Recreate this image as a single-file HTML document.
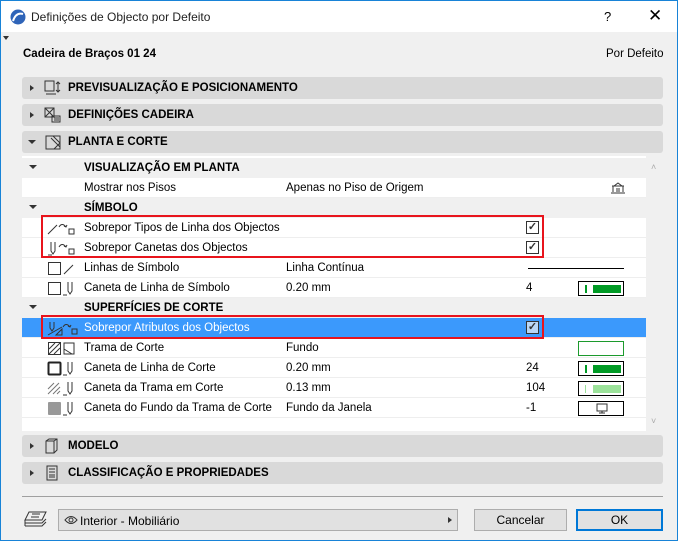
<!DOCTYPE html>
<html><head><meta charset="utf-8"><style>
*{box-sizing:border-box;margin:0;padding:0}
body{width:678px;height:541px;overflow:hidden;background:#f0f0f0;font-family:"Liberation Sans",sans-serif;font-size:11.5px;color:#000;position:relative}
.win{position:absolute;inset:0;border:1px solid #1883d7;background:#f0f0f0}
.title{position:absolute;left:0;top:0;width:676px;height:31px;background:#fff}
.title .t{position:absolute;left:30px;top:9px;font-size:12px;color:#222}
.abs{position:absolute}
.sec{position:absolute;left:21px;width:641px;height:22px;background:#d9d9d9;border-radius:3px;font-weight:bold;font-size:11.5px}
.sec .lbl{position:absolute;left:46px;top:5px}
.tri{position:absolute;left:8px;top:8px;width:0;height:0;border-top:3px solid transparent;border-bottom:3px solid transparent;border-left:4px solid #333}
.trid{position:absolute;left:6px;top:9px;width:0;height:0;border-left:4px solid transparent;border-right:4px solid transparent;border-top:4px solid #333}
.panel{position:absolute;left:21px;top:155px;width:641px;height:275px;background:#fff}
.sb{position:absolute;left:624px;top:0;width:17px;height:275px;background:#f0f0f0}
.row{position:absolute;left:0;width:624px;height:20px;border-bottom:1px solid #eee}
.row.g{background:#f0f0f0;font-weight:bold;border-bottom:none}
.row.sel{background:#3b99fc;color:#fff}
.row span{position:absolute;top:4px}
.c1{left:62px}.c2{left:264px}.c3{left:504px}
.cb{position:absolute;left:504px;top:3px;width:13px;height:13px;border:1px solid #333;background:#fff;font-size:11px;line-height:11px;text-align:center;color:#333;font-weight:bold}
.sw{position:absolute;left:556px;top:3px;width:46px;height:15px;border:1px solid #000;background:#fff}
.red{position:absolute;border:2px solid #e8141c}
.btn{position:absolute;top:508px;height:22px;background:#e1e1e1;border:1px solid #adadad;text-align:center;line-height:20px;font-size:12px}
</style></head><body><div class="win">
<div class="title">
<svg class="abs" style="left:9px;top:8px" width="16" height="16"><circle cx="8" cy="8" r="7.5" fill="#2f64b8"/><path d="M3 12 Q6 3 13 5" stroke="#fff" stroke-width="2" fill="none"/></svg>
<div class="t">Definições de Objecto por Defeito</div>
<div class="abs" style="left:603px;top:8px;font-size:13px">?</div>
<div class="abs" style="left:647px;top:5px;font-size:17px">✕</div>
</div>
<div class="abs" style="left:2px;top:35px;border-left:3px solid transparent;border-right:3px solid transparent;border-top:4px solid #333"></div>
<div class="abs" style="left:22px;top:47px;font-weight:bold;font-size:11.5px">Cadeira de Braços 01 24</div>
<div class="abs" style="left:605px;top:47px;font-size:11.5px">Por Defeito</div>

<div class="sec" style="top:76px"><div class="tri"></div><svg class="abs" style="left:22px;top:3px" width="18" height="16"><rect x="1" y="1" width="9" height="10" fill="none" stroke="#333"/><path d="M2 14h10M14 2v10M12 4l2-2 2 2M12 10l2 2 2-2" stroke="#333" fill="none"/></svg><div class="lbl">PREVISUALIZAÇÃO E POSICIONAMENTO</div></div>
<div class="sec" style="top:103px"><div class="tri"></div><svg class="abs" style="left:22px;top:3px" width="18" height="16"><rect x="1" y="1" width="9" height="9" fill="none" stroke="#333"/><path d="M1 1l9 9M10 1l-9 9M8 9h8v6H8zM10 11h5M10 13h5" stroke="#333" fill="none"/></svg><div class="lbl">DEFINIÇÕES CADEIRA</div></div>
<div class="sec" style="top:130px"><div class="trid"></div><svg class="abs" style="left:22px;top:3px" width="18" height="16"><rect x="2" y="2" width="14" height="13" fill="none" stroke="#333"/><path d="M9 2l7 7M7 4l9 9M10 15l6-6" stroke="#333"/></svg><div class="lbl">PLANTA E CORTE</div></div>

<div class="panel">
<div class="row g" style="top:2px"><div class="trid" style="left:7px;top:7px"></div><span class="c1">VISUALIZAÇÃO EM PLANTA</span></div>
<div class="row" style="top:22px"><span class="c1">Mostrar nos Pisos</span><span class="c2">Apenas no Piso de Origem</span><svg class="abs" style="left:588px;top:3px" width="16" height="14"><path d="M2 5h12M3 5v6M13 5v6M1 12h14M4 5l4-3 4 3M7 7v4M9 7v4" stroke="#333" fill="none"/></svg></div>
<div class="row g" style="top:42px"><div class="trid" style="left:7px;top:7px"></div><span class="c1">SÍMBOLO</span></div>
<div class="row" style="top:62px"><svg class="abs" style="left:25px;top:3px" width="36" height="15"><path d="M1 13l9-9M12 6q3-5 7 0M17 5l2 1 1-2M22 8h5v5h-5z" stroke="#333" fill="none"/></svg><span class="c1">Sobrepor Tipos de Linha dos Objectos</span><div class="cb">✓</div></div>
<div class="row" style="top:82px"><svg class="abs" style="left:25px;top:3px" width="36" height="15"><path d="M4 1v9l2 3 2-3V1M1 14h4M12 6q3-5 7 0M17 5l2 1 1-2M22 8h5v5h-5z" stroke="#333" fill="none"/></svg><span class="c1">Sobrepor Canetas dos Objectos</span><div class="cb">✓</div></div>
<div class="row" style="top:102px"><svg class="abs" style="left:25px;top:3px" width="36" height="15"><rect x="1.5" y="1.5" width="12" height="12" fill="none" stroke="#333"/><path d="M17 13l9-9" stroke="#333"/></svg><span class="c1">Linhas de Símbolo</span><span class="c2">Linha Contínua</span><div class="abs" style="left:506px;top:10px;width:96px;height:1px;background:#000"></div></div>
<div class="row" style="top:122px"><svg class="abs" style="left:25px;top:3px" width="36" height="15"><rect x="1.5" y="1.5" width="12" height="12" fill="none" stroke="#333"/><path d="M21 1v9l2 3 2-3V1M16 14h4" stroke="#333" fill="none"/></svg><span class="c1">Caneta de Linha de Símbolo</span><span class="c2">0.20 mm</span><span class="c3">4</span><div class="sw"><div class="abs" style="left:6px;top:3px;width:2px;height:8px;background:#009a25"></div><div class="abs" style="left:14px;top:3px;width:28px;height:8px;background:#009a25"></div></div></div>
<div class="row g" style="top:142px"><div class="trid" style="left:7px;top:7px"></div><span class="c1">SUPERFÍCIES DE CORTE</span></div>
<div class="row sel" style="top:162px"><svg class="abs" style="left:25px;top:3px" width="36" height="15"><path d="M3 1v6l2 3 2-3V1M1 14l14-8M9 14l6-6v6zM16 6q3-5 7 0M21 5l2 1 1-2M25 8h5v5h-5z" stroke="#333" fill="none"/></svg><span class="c1">Sobrepor Atributos dos Objectos</span><div class="cb" style="background:#b9d6f5">✓</div></div>
<div class="row" style="top:182px"><svg class="abs" style="left:25px;top:3px" width="36" height="15"><rect x="1.5" y="1.5" width="12" height="12" fill="none" stroke="#333"/><path d="M2 8l6-6M2 13l11-11M7 13l6-6" stroke="#333"/><path d="M17 2h10v11H17zM17 8l8 5" stroke="#333" fill="none"/></svg><span class="c1">Trama de Corte</span><span class="c2">Fundo</span><div class="sw" style="border-color:#1c9a2d"></div></div>
<div class="row" style="top:202px"><svg class="abs" style="left:25px;top:3px" width="36" height="15"><rect x="1.5" y="1.5" width="12" height="12" rx="1" fill="none" stroke="#222" stroke-width="2"/><path d="M21 1v9l2 3 2-3V1M16 14h4" stroke="#333" fill="none"/></svg><span class="c1">Caneta de Linha de Corte</span><span class="c2">0.20 mm</span><span class="c3">24</span><div class="sw"><div class="abs" style="left:6px;top:3px;width:2px;height:8px;background:#009a25"></div><div class="abs" style="left:14px;top:3px;width:28px;height:8px;background:#009a25"></div></div></div>
<div class="row" style="top:222px"><svg class="abs" style="left:25px;top:3px" width="36" height="15"><path d="M1 8l6-6M1 13l11-11M6 13l7-7M10 13l3-3" stroke="#777"/><path d="M21 1v9l2 3 2-3V1M16 14h4" stroke="#333" fill="none"/></svg><span class="c1">Caneta da Trama em Corte</span><span class="c2">0.13 mm</span><span class="c3">104</span><div class="sw"><div class="abs" style="left:6px;top:3px;width:1px;height:8px;background:#9be29a"></div><div class="abs" style="left:14px;top:3px;width:28px;height:8px;background:#9be29a"></div></div></div>
<div class="row" style="top:242px"><svg class="abs" style="left:25px;top:3px" width="36" height="15"><rect x="1" y="1" width="13" height="13" rx="1" fill="#999"/><path d="M21 1v9l2 3 2-3V1M16 14h4" stroke="#333" fill="none"/></svg><span class="c1">Caneta do Fundo da Trama de Corte</span><span class="c2">Fundo da Janela</span><span class="c3">-1</span><div class="sw"><svg class="abs" style="left:17px;top:1px" width="12" height="11"><rect x="1" y="1" width="10" height="7" fill="none" stroke="#333"/><path d="M6 8v2M3 10h6" stroke="#333"/></svg></div></div>
<div class="sb"><div class="abs" style="left:5px;top:6px;font-size:9px;color:#aaa">˄</div><div class="abs" style="left:5px;top:260px;font-size:9px;color:#aaa">˅</div></div>
</div>
<div class="red" style="left:40px;top:214px;width:503px;height:43px"></div>
<div class="red" style="left:40px;top:314px;width:503px;height:24px"></div>

<div class="sec" style="top:434px"><div class="tri"></div><svg class="abs" style="left:22px;top:3px" width="18" height="16"><path d="M2 3l3-2h8v11l-3 3H2zM2 3h8v12M10 3l3-2" stroke="#333" fill="none"/></svg><div class="lbl">MODELO</div></div>
<div class="sec" style="top:461px"><div class="tri"></div><svg class="abs" style="left:22px;top:3px" width="18" height="16"><rect x="3" y="1" width="10" height="14" fill="none" stroke="#333"/><path d="M5 4h6M5 7h6M5 10h6M5 12h6" stroke="#333"/></svg><div class="lbl">CLASSIFICAÇÃO E PROPRIEDADES</div></div>
<div class="abs" style="left:21px;top:495px;width:641px;height:1px;background:#a0a0a0"></div>
<svg class="abs" style="left:23px;top:509px" width="24" height="20"><path d="M5 2h17l-4 8H1zM1 13h17l4-4M1 16h17l4-4M1 10v6" stroke="#333" fill="none"/><path d="M8 4h8M7 7h8" stroke="#333"/></svg>
<div class="abs" style="left:57px;top:508px;width:400px;height:22px;background:#e1e1e1;border:1px solid #adadad"><svg class="abs" style="left:5px;top:5px" width="14" height="10"><path d="M1 5q6-7 12 0q-6 7-12 0z" fill="none" stroke="#333"/><circle cx="7" cy="5" r="2" fill="none" stroke="#333"/></svg><div class="abs" style="left:21px;top:4px;font-size:12px">Interior - Mobiliário</div><div class="abs" style="left:389px;top:7px;border-top:3px solid transparent;border-bottom:3px solid transparent;border-left:4px solid #333"></div></div>
<div class="btn" style="left:473px;width:93px">Cancelar</div>
<div class="btn" style="left:575px;width:87px;border:2px solid #0078d7;line-height:18px">OK</div>
</div></body></html>
